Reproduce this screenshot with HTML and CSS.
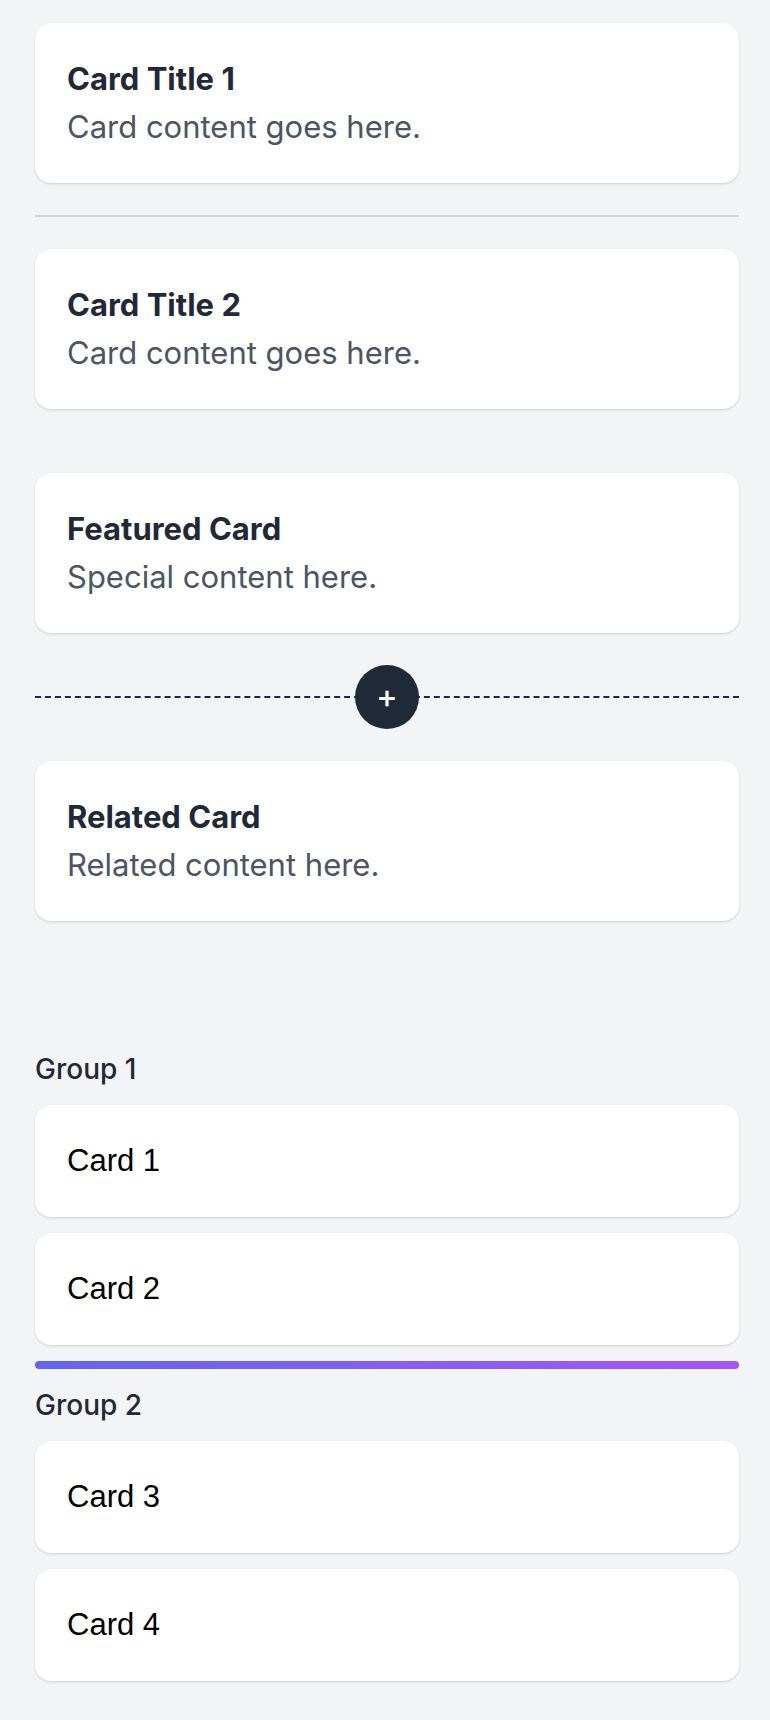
FILE: index.html
```html
<!DOCTYPE html>
<html lang="en">
<head>
  <meta charset="UTF-8" />
  <meta name="viewport" content="width=device-width, initial-scale=1.0"/>
  <title>Card Layout</title>
  <link rel="stylesheet" href="styles.css">
</head>
<body>

  <main class="page">
    <div class="card">
      <h3 class="card-title">Card Title 1</h3>
      <p class="card-text">Card content goes here.</p>
    </div>

    <hr class="divider">

    <div class="card">
      <h3 class="card-title">Card Title 2</h3>
      <p class="card-text">Card content goes here.</p>
    </div>

    <div class="card featured">
      <h3 class="card-title">Featured Card</h3>
      <p class="card-text">Special content here.</p>
    </div>

    <div class="add-divider">
      <button class="add-btn">+</button>
    </div>

    <div class="card">
      <h3 class="card-title">Related Card</h3>
      <p class="card-text">Related content here.</p>
    </div>

    <section class="groups">
      <div class="group">
        <div class="group-label">Group 1</div>
        <div class="card simple">Card 1</div>
        <div class="card simple">Card 2</div>
      </div>

      <div class="gradient-bar"></div>

      <div class="group">
        <div class="group-label">Group 2</div>
        <div class="card simple">Card 3</div>
        <div class="card simple">Card 4</div>
      </div>
    </section>
  </main>

</body>
</html>
```

FILE: styles.css
```css
body {
  margin: 0;
  font-family: Inter, "Noto Sans", sans-serif;
  background-color: #f3f4f6;
}

.page {
  display: flex;
  flex-direction: column;
  padding: 23px 31px 40px 35px;
}

.card {
  background-color: #fff;
  border-radius: 16px;
  padding: 32px;
  box-shadow: 0 1px 3px rgba(0,0,0,0.1), 0 1px 2px rgba(0,0,0,0.06);
}

.card-title {
  margin: 0;
  font-size: 31px;
  line-height: 48px;
  font-weight: 700;
  color: #1f2937;
}

.card-text {
  margin: 0;
  font-size: 31px;
  line-height: 48px;
  color: #4b5563;
}

.divider {
  width: 100%;
  margin: 32px 0;
  border: none;
  border-top: 2px solid #d1d5db;
}

.featured {
  margin-top: 64px;
}

.add-divider {
  display: flex;
  align-items: center;
  justify-content: center;
  height: 64px;
  margin: 32px 0;
  position: relative;
}

.add-divider::before {
  content: "";
  position: absolute;
  left: 0;
  right: 0;
  top: 31px;
  border-top: 2px dashed #1f2937;
}

.add-btn {
  position: relative;
  width: 64px;
  height: 64px;
  border-radius: 50%;
  border: none;
  background-color: #1f2937;
  color: #fff;
  font-family: Inter, sans-serif;
  font-size: 32px;
  font-weight: 500;
  line-height: 1;
  padding: 0;
  cursor: pointer;
}

.groups {
  margin-top: 128px;
}

.group {
  display: flex;
  flex-direction: column;
  gap: 16px;
}

.group-label {
  font-size: 28px;
  line-height: 40px;
  font-weight: 500;
  color: #1f2937;
}

.card.simple {
  font-family: "Liberation Sans", Arial, sans-serif;
  font-size: 31px;
  line-height: 48px;
  color: #000;
}

.gradient-bar {
  height: 8px;
  margin: 16px 0;
  border-radius: 9999px;
  background: linear-gradient(to right, #6366f1, #a855f7);
}
```
